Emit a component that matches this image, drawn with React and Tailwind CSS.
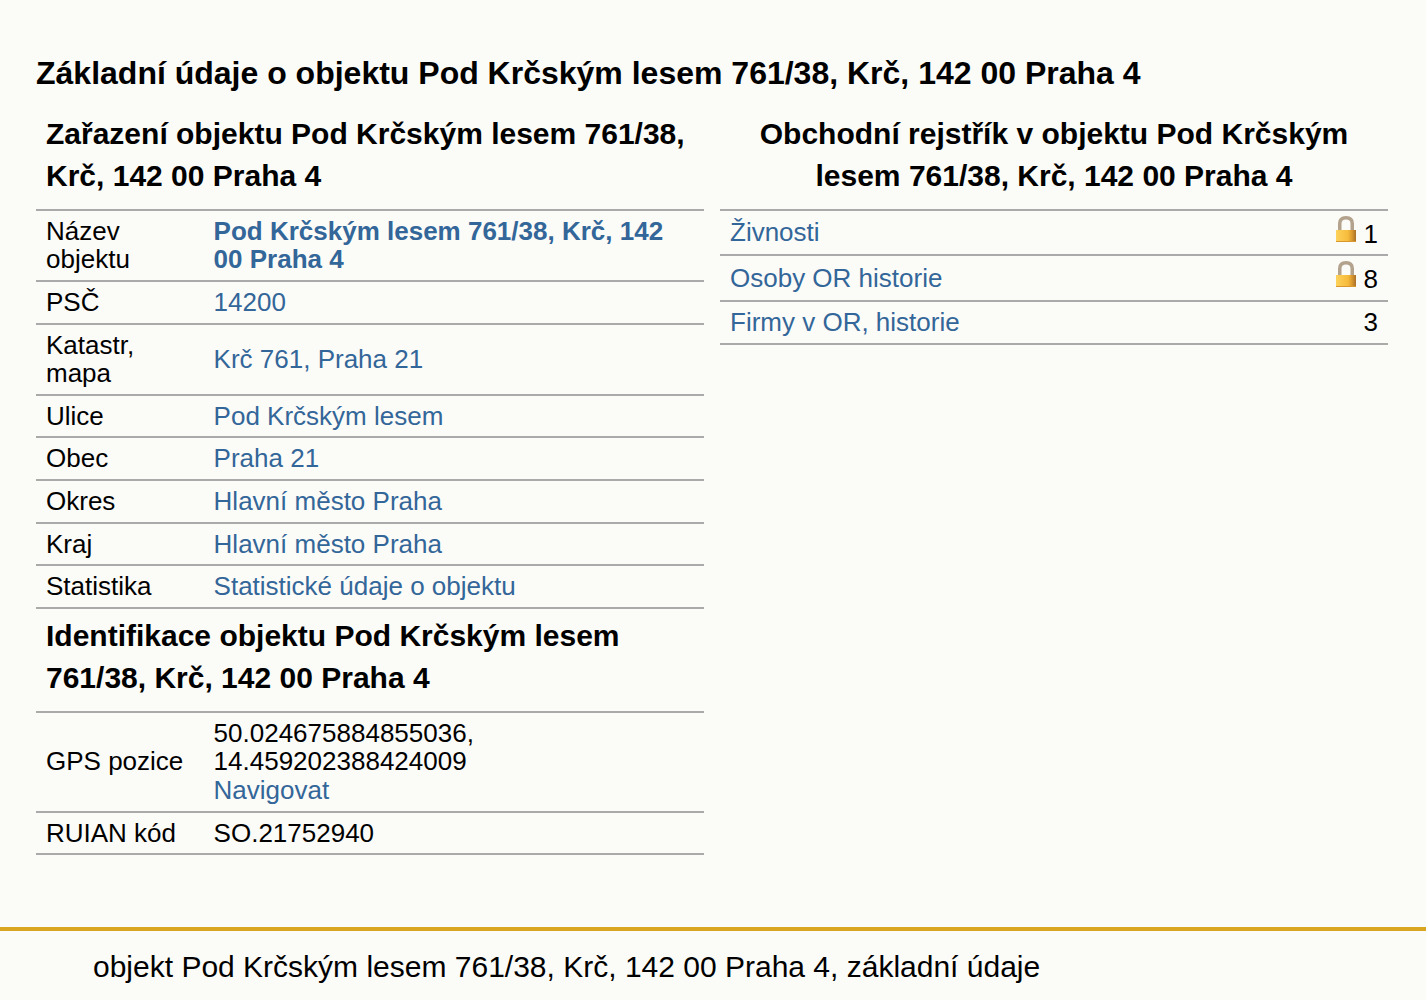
import React from 'react';

const placeRows = [
  { label: 'Název objektu', value: 'Pod Krčským lesem 761/38, Krč, 142 00 Praha 4', bold: true },
  { label: 'PSČ', value: '14200' },
  { label: 'Katastr, mapa', value: 'Krč 761, Praha 21' },
  { label: 'Ulice', value: 'Pod Krčským lesem' },
  { label: 'Obec', value: 'Praha 21' },
  { label: 'Okres', value: 'Hlavní město Praha' },
  { label: 'Kraj', value: 'Hlavní město Praha' },
  { label: 'Statistika', value: 'Statistické údaje o objektu' },
];

const registerRows = [
  { label: 'Živnosti', count: 1, locked: true },
  { label: 'Osoby OR historie', count: 8, locked: true },
  { label: 'Firmy v OR, historie', count: 3 },
];

function Lock() {
  return (
    <svg width="20" height="26" viewBox="0 0 20 26" className="shrink-0 self-start -mt-px">
      <defs>
        <linearGradient id="lockBody" x1="0" y1="0" x2="1" y2="0">
          <stop offset="0" stopColor="#fdd25a" />
          <stop offset="0.6" stopColor="#f6bb3c" />
          <stop offset="0.8" stopColor="#d9982f" />
          <stop offset="1" stopColor="#a9702a" />
        </linearGradient>
      </defs>
      <path d="M3.750 15V7.500C3.750 3.500 6 1.750 10 1.750s6.250 1.750 6.250 5.750V15" fill="none" stroke="#b3a28c" strokeWidth="3.500" />
      <rect x="0" y="14" width="20" height="12" fill="url(#lockBody)" />
      <rect x="0" y="25" width="20" height="1" fill="#d9982f" />
    </svg>
  );
}

function Row({ children, className = '' }) {
  return <div className={`flex border-b-2 border-[#aaaaaa] ${className}`}>{children}</div>;
}

function Heading({ children, className = '' }) {
  return <h2 className={`px-2.5 pb-3 text-[30px] leading-[42px] font-bold ${className}`}>{children}</h2>;
}

export default function App() {
  return (
    <div className="min-h-[1000px] bg-[#fbfbf7] text-[26px] leading-[28.6px] text-black font-['Liberation_Sans',Arial,sans-serif]">
      <main className="px-9 pt-[52px] pb-[72px]">
        <h1 className="text-[32px] leading-[42px] font-bold">
          Základní údaje o objektu Pod Krčským lesem 761/38, Krč, 142 00 Praha 4
        </h1>

        <div className="mt-[18.8px] grid grid-cols-[668px_668px] gap-4">
          <section>
            <Heading>Zařazení objektu Pod Krčským lesem 761/38, Krč, 142 00 Praha 4</Heading>
            <div className="border-t-2 border-[#aaaaaa]">
              {placeRows.map((row) => (
                <Row key={row.label} className="items-center py-1.5">
                  <div className="w-[177.6px] shrink-0 pl-2.5 pr-6">{row.label}</div>
                  <a className={`flex-1 pr-2 text-[#336699] ${row.bold ? 'font-bold' : ''}`}>{row.value}</a>
                </Row>
              ))}
            </div>

            <Heading className="pt-1.5">Identifikace objektu Pod Krčským lesem 761/38, Krč, 142 00 Praha 4</Heading>
            <div className="border-t-2 border-[#aaaaaa]">
              <Row className="items-center py-1.5">
                <div className="w-[177.6px] shrink-0 pl-2.5">GPS pozice</div>
                <div className="flex-1">
                  <div>50.024675884855036,</div>
                  <div>14.459202388424009</div>
                  <a className="text-[#336699]">Navigovat</a>
                </div>
              </Row>
              <Row className="items-center py-1.5">
                <div className="w-[177.6px] shrink-0 pl-2.5">RUIAN kód</div>
                <div className="flex-1">SO.21752940</div>
              </Row>
            </div>
          </section>

          <section>
            <Heading className="text-center">Obchodní rejstřík v objektu Pod Krčským lesem 761/38, Krč, 142 00 Praha 4</Heading>
            <div className="border-t-2 border-[#aaaaaa]">
              {registerRows.map((row) => (
                <Row key={row.label} className="items-center justify-between px-2.5 py-1.5">
                  <a className="text-[#336699]">{row.label}</a>
                  <div className={`flex items-end gap-2 ${row.locked ? 'h-[31.6px]' : ''}`}>
                    {row.locked && <Lock />}
                    <span>{row.count}</span>
                  </div>
                </Row>
              ))}
            </div>
          </section>
        </div>
      </main>

      <footer className="border-t-4 border-[#daa520] pl-[93px] pt-[19px] text-[30px] leading-[34px]">
        objekt Pod Krčským lesem 761/38, Krč, 142 00 Praha 4, základní údaje
      </footer>
    </div>
  );
}
